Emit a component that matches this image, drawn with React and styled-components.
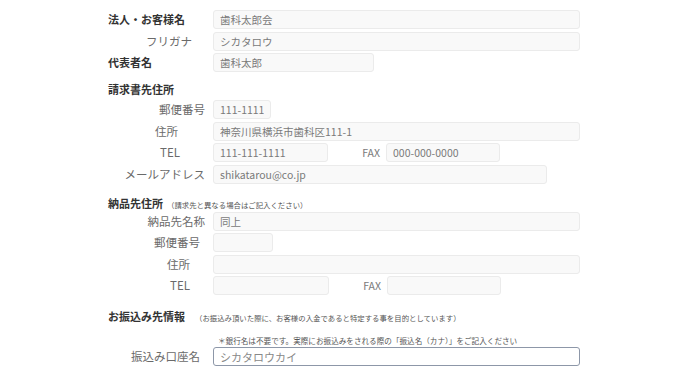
import React from "react";
import styled, { createGlobalStyle } from "styled-components";

const GlobalStyle = createGlobalStyle`
  html, body { margin: 0; padding: 0; background: #ffffff; }
  body { font-family: "Noto Sans CJK JP", "Noto Sans", sans-serif; }
`;

const Page = styled.div`
  padding: 10px 0 0 108px;
  width: 690px;
  box-sizing: border-box;
`;

const Group = styled.div`
  display: flex;
  flex-direction: column;
  gap: 2.5px;
`;

const Row = styled.div`
  display: flex;
  align-items: center;
  height: 19px;
`;

const Label = styled.div`
  width: 97px;
  flex: none;
  margin-right: 8px;
  box-sizing: border-box;
  line-height: 19px;
  white-space: nowrap;
  font-size: ${(p) => (p.$bold ? 11 : 11.5)}px;
  font-weight: ${(p) => (p.$bold ? 700 : 400)};
  color: ${(p) => (p.$bold ? "#333" : "#6a6a6a")};
  text-align: ${(p) => (p.$bold ? "left" : "right")};
  padding-right: ${(p) => p.$pr || 0}px;
`;

const Field = styled.input`
  width: ${(p) => p.$w}px;
  height: 19px;
  box-sizing: border-box;
  margin: 0;
  padding: 0 6px;
  border: 1px solid ${(p) => (p.$active ? "#8d97a8" : "#ebebeb")};
  border-radius: 3px;
  background: ${(p) => (p.$active ? "#ffffff" : "#f9f9f9")};
  font-family: "Noto Sans CJK JP", "Noto Sans", sans-serif;
  font-size: ${(p) => (p.$active ? 11 : 10.5)}px;
  color: ${(p) => (p.$active ? "#888" : "#7a7a7a")};
  outline: none;
`;

const FaxLabel = styled.div`
  width: 58px;
  flex: none;
  box-sizing: border-box;
  padding-right: 6px;
  text-align: right;
  font-size: 10.5px;
  line-height: 19px;
  color: #7a7a7a;
`;

const Heading = styled.div`
  margin-top: ${(p) => p.$mt}px;
  margin-bottom: ${(p) => p.$mb}px;
  line-height: ${(p) => p.$lh}px;
  font-size: 11px;
  font-weight: 700;
  color: #333;
  white-space: nowrap;
`;

const HeadNote = styled.span`
  margin-left: ${(p) => p.$gap}px;
  font-size: 7.4px;
  font-weight: 400;
  color: #555;
`;

const Note = styled.div`
  margin: 11px 0 1px 110px;
  line-height: 10px;
  font-size: 7.6px;
  color: #555;
  white-space: nowrap;
`;

const TextRow = ({ label, pr, bold, w, value, active }) => (
  <Row>
    <Label $pr={pr} $bold={bold}>{label}</Label>
    <Field $w={w} $active={active} readOnly defaultValue={value} />
  </Row>
);

const TelRow = ({ pr, tel, fax, telW }) => (
  <Row>
    <Label $pr={pr}>TEL</Label>
    <Field $w={telW} readOnly defaultValue={tel} />
    <FaxLabel>FAX</FaxLabel>
    <Field $w={114} readOnly defaultValue={fax} />
  </Row>
);

export default function App() {
  return (
    <>
      <GlobalStyle />
      <Page>
        <Group>
          <TextRow label="法人・お客様名" bold w={367} value="歯科太郎会" />
          <TextRow label="フリガナ" pr={13} w={367} value="シカタロウ" />
          <TextRow label="代表者名" bold w={161} value="歯科太郎" />
        </Group>

        <Heading $mt={10} $mb={4} $lh={14}>請求書先住所</Heading>
        <Group>
          <TextRow label="郵便番号" pr={0} w={58} value="111-1111" />
          <TextRow label="住所" pr={27} w={367} value="神奈川県横浜市歯科区111-1" />
          <TelRow pr={25} telW={115} tel="111-111-1111" fax="000-000-0000" />
          <TextRow label="メールアドレス" pr={0} w={334} value="shikatarou@co.jp" />
        </Group>

        <Heading $mt={13} $mb={1} $lh={12}>
          納品先住所
          <HeadNote $gap={4}>（請求先と異なる場合はご記入ください）</HeadNote>
        </Heading>
        <Group>
          <TextRow label="納品先名称" pr={0} w={367} value="同上" />
          <TextRow label="郵便番号" pr={5} w={60} value="" />
          <TextRow label="住所" pr={15} w={367} value="" />
          <TelRow pr={15} telW={116} tel="" fax="" />
        </Group>

        <Heading $mt={14} $mb={0} $lh={14}>
          お振込み先情報
          <HeadNote $gap={10}>（お振込み頂いた際に、お客様の入金であると特定する事を目的としています）</HeadNote>
        </Heading>
        <Note>＊銀行名は不要です。実際にお振込みをされる際の「振込名（カナ）」をご記入ください</Note>
        <Group>
          <TextRow label="振込み口座名" pr={5} w={367} value="シカタロウカイ" active />
        </Group>
      </Page>
    </>
  );
}
